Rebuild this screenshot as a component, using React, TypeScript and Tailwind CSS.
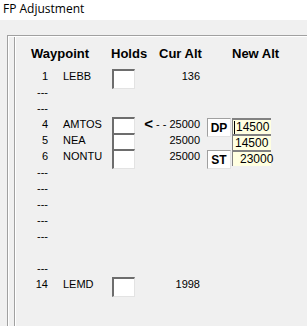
import React from "react";

type Row = {
  num?: string;
  name?: string;
  hold?: boolean;
  alt?: string;
  arrow?: boolean;
  tag?: string;
  newAlt?: string;
  caret?: boolean;
  blank?: boolean;
};

const rows: Row[] = [
  { num: "1", name: "LEBB", hold: true, alt: "136" },
  { num: "---" },
  { num: "---" },
  { num: "4", name: "AMTOS", hold: true, alt: "25000", arrow: true, tag: "DP", newAlt: "14500", caret: true },
  { num: "5", name: "NEA", hold: true, alt: "25000", newAlt: "14500" },
  { num: "6", name: "NONTU", hold: true, alt: "25000", tag: "ST", newAlt: "23000" },
  { num: "---" },
  { num: "---" },
  { num: "---" },
  { num: "---" },
  { num: "---" },
  { blank: true },
  { num: "---" },
  { num: "14", name: "LEMD", hold: true, alt: "1998" },
];

function HoldBox() {
  return (
    <div className="mt-[1px] h-[20px] w-[23px] border-t-2 border-l-2 border-r border-b border-t-[#6d6d6d] border-l-[#6d6d6d] border-r-[#e3e3e3] border-b-[#e3e3e3] bg-white" />
  );
}

function WaypointRow({ row }: { row: Row }) {
  return (
    <div className="relative flex h-4 items-start text-[11px] leading-4 text-black">
      <span className="w-[32px] text-right">{row.num}</span>
      <span className="ml-[15px] w-[49px]">{row.name}</span>
      <div className="w-[23px]">{row.hold && <HoldBox />}</div>
      <div className="flex w-[65px] items-center justify-end">
        {row.arrow && (
          <span className="flex items-center">
            <span className="text-[15px] font-black leading-4">&lt;</span>
            <span className="ml-[3px] tracking-[3px]">--</span>
          </span>
        )}
        <span>{row.alt}</span>
      </div>
      <div className="ml-[7px] flex">
        <div className="w-[24px]">
          {row.tag && (
            <div className="mt-[2px] flex h-[19px] w-[24px] items-center justify-center border border-t-[#a0a0a0] border-l-[#a0a0a0] border-r-[#e3e3e3] border-b-[#e3e3e3] bg-white text-[12px] font-bold">
              {row.tag}
            </div>
          )}
        </div>
        {row.newAlt && (
          <div
            className={
              "mt-[2px] ml-[1px] flex h-[16px] w-[39px] items-center border-t-2 border-l border-t-[#828282] border-l-[#828282] bg-[#ffffe1] text-[12px] " +
              (row.caret ? "pl-[1px]" : row.tag ? "pl-[7px]" : "pl-[2px]")
            }
          >
            {row.caret && <span className="mr-[1px] h-[13px] w-[1px] bg-black" />}
            {row.newAlt}
          </div>
        )}
      </div>
    </div>
  );
}

export default function App() {
  return (
    <div className="h-[326px] w-[307px] overflow-hidden bg-[#f0f0f0] font-['Liberation_Sans',Arial,sans-serif]">
      <div className="h-[20px] bg-white pl-[3px] pt-[1px] font-['Open_Sans','Noto_Sans',sans-serif] text-[12px] leading-[16px] text-black">
        FP Adjustment
      </div>
      <div className="ml-[7px] mt-[15px] h-[291px] border-t border-l border-[#a0a0a0]">
        <div className="h-full border-t border-l border-white">
          <div className="ml-[5px] h-full border-l border-[#a0a0a0]">
            <div className="h-full border-l border-white">
              <div className="flex pt-[9px] text-[13px] font-bold leading-4 text-black">
                <span className="ml-[15px] w-[80px]">Waypoint</span>
                <span className="w-[48px]">Holds</span>
                <span className="w-[73px]">Cur Alt</span>
                <span>New Alt</span>
              </div>
              <div className="mt-[6px] flex flex-col">
                {rows.map((row, i) => (
                  <WaypointRow row={row} key={i} />
                ))}
              </div>
            </div>
          </div>
        </div>
      </div>
    </div>
  );
}
